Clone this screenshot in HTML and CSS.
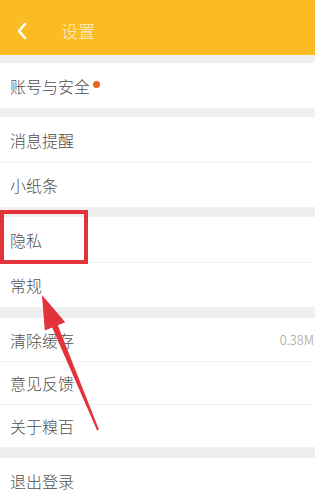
FILE: index.html
```html
<!DOCTYPE html>
<html lang="zh-CN">
<head>
    <meta charset="UTF-8">
    <meta name="viewport" content="width=device-width, initial-scale=1.0">
    <title>设置</title>
    <link rel="stylesheet" href="styles.css">
</head>
<body>
    <header class="topbar">
        <svg class="back" width="12" height="18" viewBox="0 0 12 18">
            <polyline points="9,2 3,9 9,16" fill="none" stroke="#fff" stroke-width="2.6" stroke-linecap="round" stroke-linejoin="round"/>
        </svg>
        <h1>设置</h1>
    </header>

    <main class="settings">
        <section class="group">
            <div class="row">账号与安全<span class="dot"></span></div>
        </section>

        <section class="group">
            <div class="row">消息提醒</div>
            <div class="row">小纸条</div>
        </section>

        <section class="group">
            <div class="row">隐私</div>
            <div class="row">常规</div>
        </section>

        <section class="group">
            <div class="row row-sm">清除缓存<span class="value">0.38M</span></div>
            <div class="row row-sm">意见反馈</div>
            <div class="row row-sm">关于糗百</div>
        </section>

        <section class="group group-last">
            <div class="row">退出登录</div>
        </section>
    </main>

    <!-- 标注：红框和箭头 -->
    <div class="mark-box"></div>
    <svg class="mark-arrow" width="80" height="150" viewBox="30 285 80 150">
        <polygon fill="#e2323a" points="42,295 65.2,322.2 57.8,325.3 98.9,429.6 97.1,430.4 52.2,327.5 44.8,330.6"/>
    </svg>
</body>
</html>
```

FILE: styles.css
```css
body {
    margin: 0;
    padding: 0;
    font-family: "Noto Sans CJK SC", "Noto Sans", sans-serif;
    background-color: #efefef;
    color: #505050;
    width: 315px;
    height: 500px;
    overflow: hidden;
    position: relative;
}

.topbar {
    height: 55px;
    background: #fbbb22;
    display: flex;
    align-items: center;
    padding: 0 0 0 16px;
    box-sizing: border-box;
}

.topbar .back {
    margin-top: 7px;
}

.topbar h1 {
    margin: 0 0 0 33px;
    padding-top: 6px;
    font-size: 17px;
    font-weight: 300;
    color: #fdf0cf;
}

.settings {
    padding-top: 8px;
}

.group {
    background: #fff;
    margin-bottom: 9px;
}

.group:nth-child(2) {
    margin-bottom: 10px;
}

.group:nth-child(3) {
    margin-bottom: 11px;
}

.group:nth-child(4) {
    margin-bottom: 11px;
}

.row {
    height: 45px;
    display: flex;
    align-items: center;
    padding: 0 0 0 10px;
    font-size: 16px;
    font-weight: 300;
    border-top: 1px solid #f2f2f2;
    box-sizing: border-box;
}

.row:first-child {
    border-top: none;
}

.row-sm {
    height: 43px;
}

.dot {
    width: 7px;
    height: 7px;
    border-radius: 50%;
    background: #e8641e;
    margin-left: 3px;
    margin-top: -2px;
}

.value {
    margin-left: auto;
    font-size: 13px;
    color: #a0a0a0;
    margin-right: 1px;
}

.mark-box {
    position: absolute;
    left: 0;
    top: 210px;
    width: 88px;
    height: 54px;
    border: 4px solid #e2323a;
    box-sizing: border-box;
}

.mark-arrow {
    position: absolute;
    left: 30px;
    top: 285px;
}
```
